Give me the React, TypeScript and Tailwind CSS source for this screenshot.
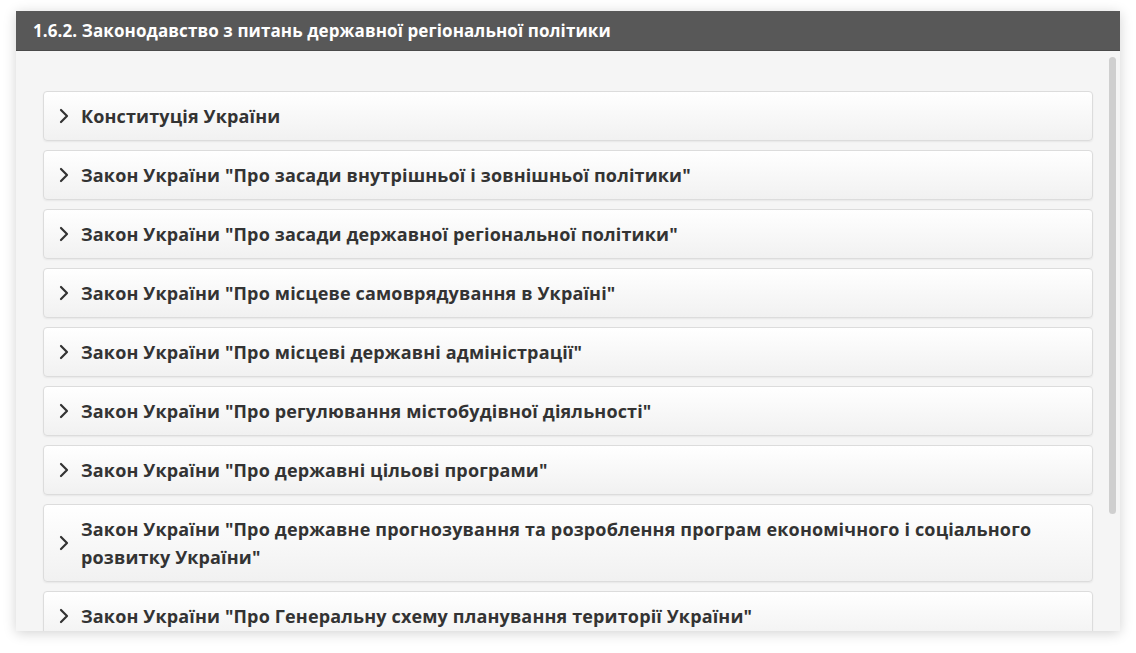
import { ChevronRight } from "lucide-react";

const laws = [
  "Конституція України",
  "Закон України \"Про засади внутрішньої і зовнішньої політики\"",
  "Закон України \"Про засади державної регіональної політики\"",
  "Закон України \"Про місцеве самоврядування в Україні\"",
  "Закон України \"Про місцеві державні адміністрації\"",
  "Закон України \"Про регулювання містобудівної діяльності\"",
  "Закон України \"Про державні цільові програми\"",
  "Закон України \"Про державне прогнозування та розроблення програм економічного і соціального розвитку України\"",
  "Закон України \"Про Генеральну схему планування території України\"",
];

function LawItem({ title }: { title: string }) {
  return (
    <div className="flex items-center gap-[5px] rounded-[4px] border border-[#dcdcdc] bg-gradient-to-b from-white to-[#f1f1f1] pl-[8px] pr-[40px] py-[10px] shadow-[0_1px_2px_rgba(0,0,0,0.06)]">
      <ChevronRight className="w-[24px] h-[24px] shrink-0 text-[#333]" strokeWidth={2.2} />
      <span className="text-[18px] leading-[28px] font-bold text-[#333] tracking-[0.15px]">{title}</span>
    </div>
  );
}

export default function App() {
  return (
    <div
      className="w-[1136px] h-[653px] bg-white pt-[11px] pl-[16px]"
      style={{ fontFamily: '"Open Sans", "Noto Sans", sans-serif' }}
    >
      <div className="w-[1104px] h-[620px] flex flex-col bg-[#f5f5f5] shadow-[0_2px_12px_rgba(0,0,0,0.18)] overflow-hidden">
        <div className="h-[40px] shrink-0 bg-[#585858] border-b border-[#4a4a4a] flex items-center px-[17px]">
          <h3 className="text-[17px] font-bold text-white tracking-[0.1px]">
            1.6.2. Законодавство з питань державної регіональної політики
          </h3>
        </div>
        <div className="relative flex-1 overflow-hidden">
          <div className="flex flex-col gap-[9px] pt-[40px] pl-[27px] pr-[27px]">
            {laws.map((l) => (
              <LawItem key={l} title={l} />
            ))}
          </div>
          <div className="absolute right-[4px] top-[6px] w-[7px] h-[457px] rounded-full bg-[#cfcfcf]" />
        </div>
      </div>
    </div>
  );
}
